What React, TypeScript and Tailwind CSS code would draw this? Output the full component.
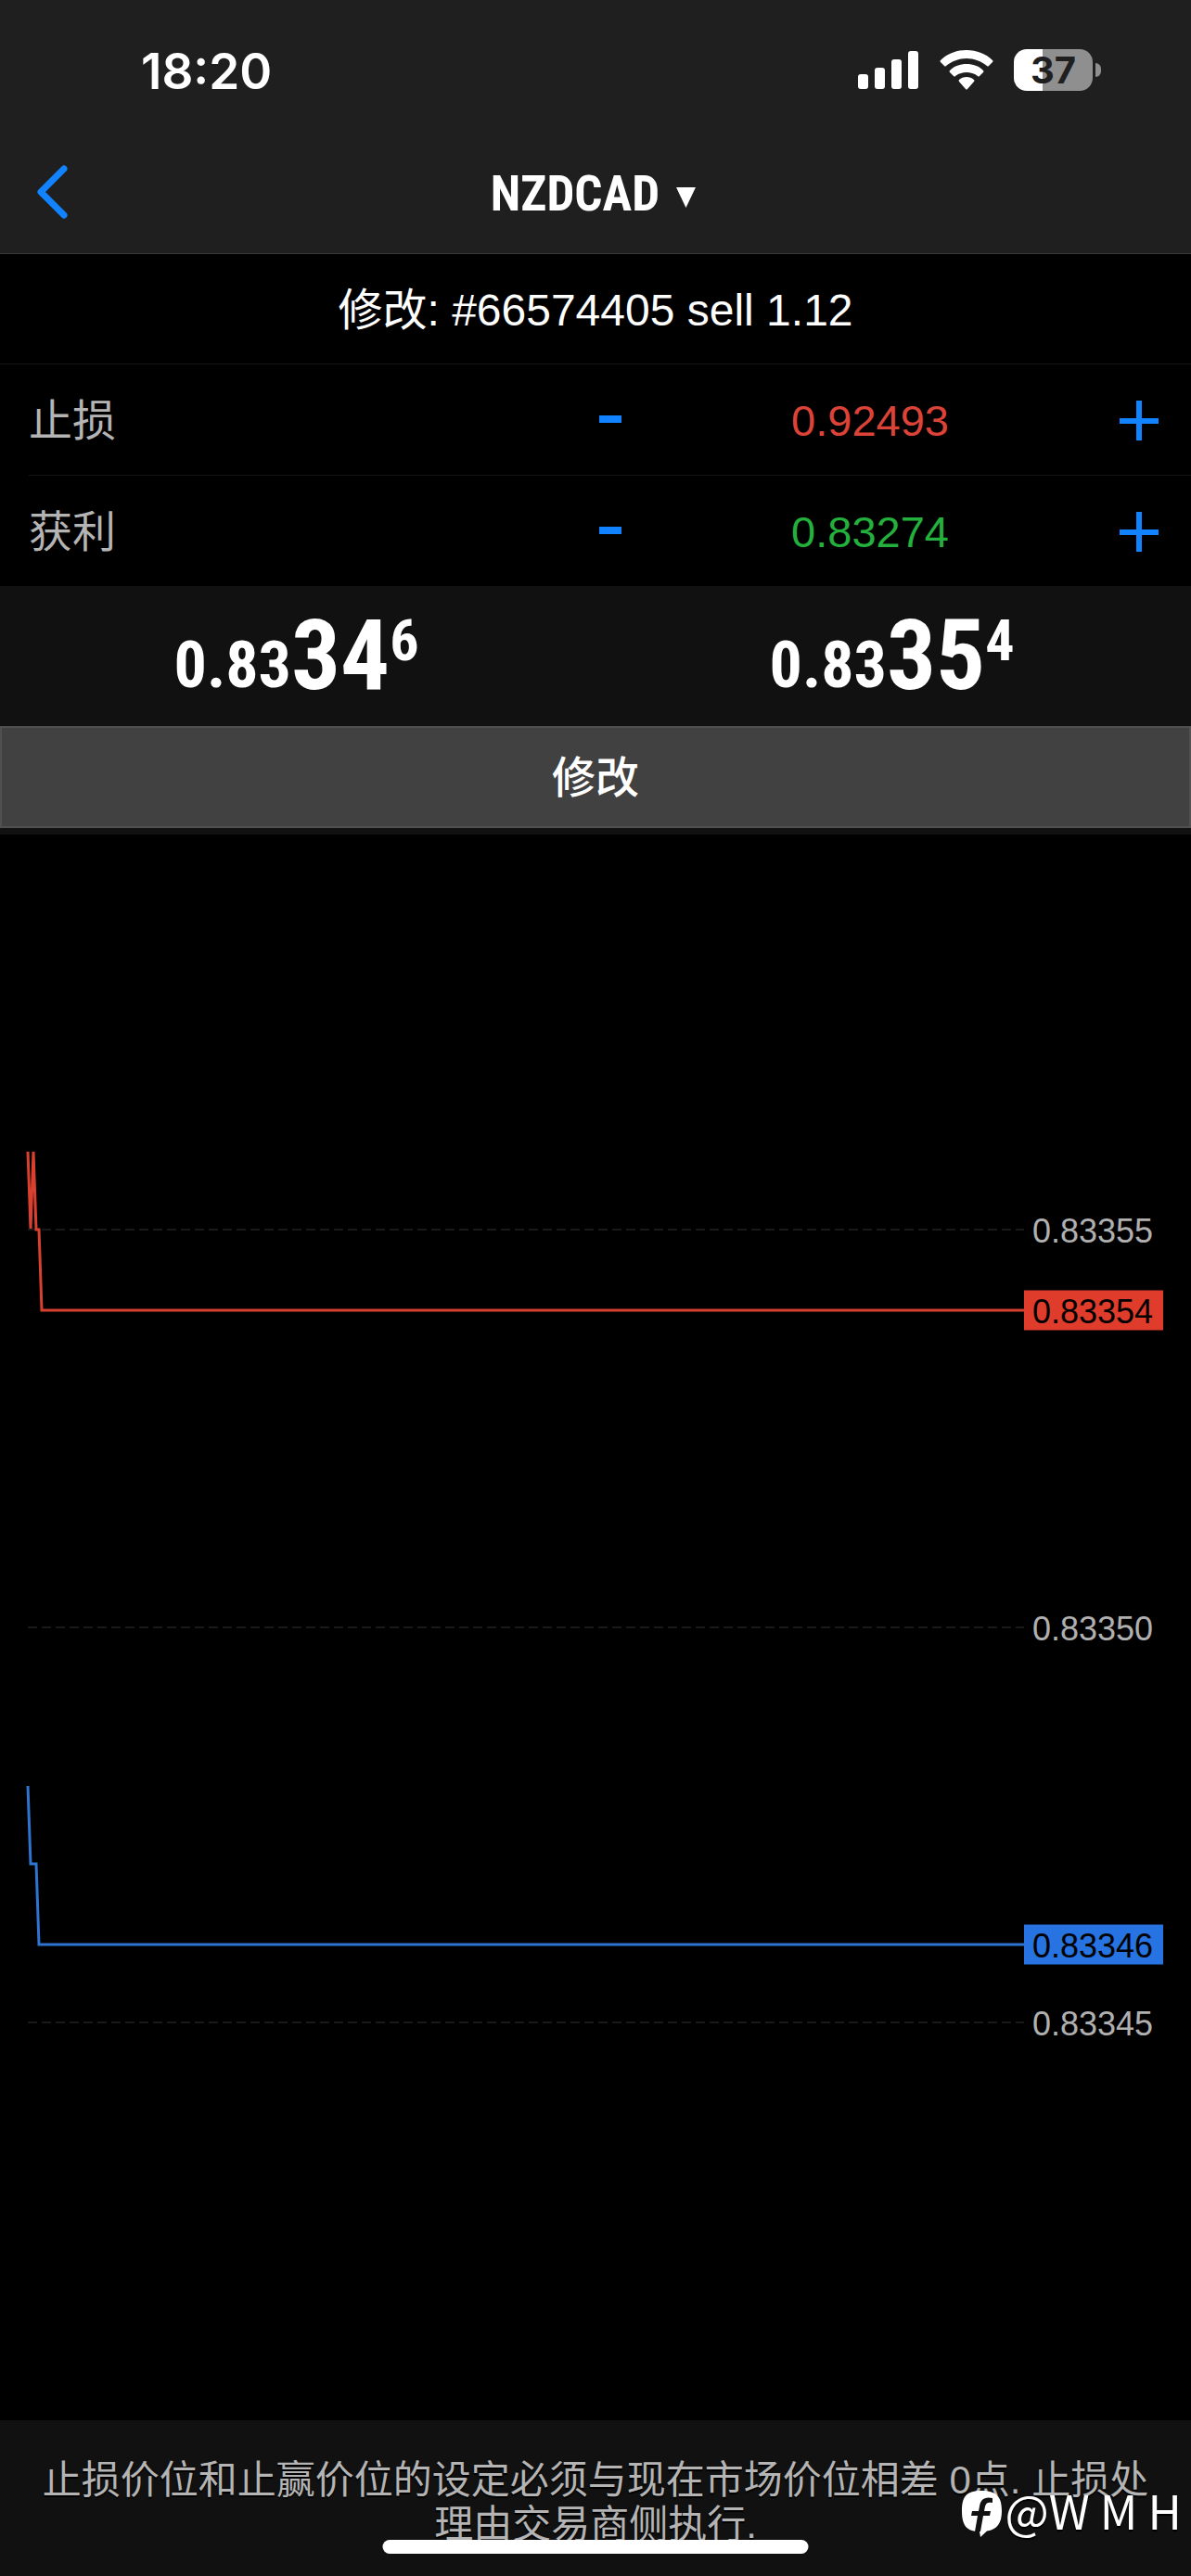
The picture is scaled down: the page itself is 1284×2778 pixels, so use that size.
import { useState } from 'react'

const CHART_W = 1074
const CHART_H = 1710

const gridLines = [
  { price: '0.83355', y: 426 },
  { price: '0.83350', y: 855 },
  { price: '0.83345', y: 1281 },
]

const series = [
  {
    id: 'ask',
    price: '0.83354',
    y: 513,
    points: '0,342 3,425 6,342 9,426 12,426 15,513 1074,513',
    stroke: 'stroke-[#d9402f]',
    tag: 'bg-[#e03c2b]',
  },
  {
    id: 'bid',
    price: '0.83346',
    y: 1197,
    points: '0,1026 3,1110 9,1110 12,1197 1074,1197',
    stroke: 'stroke-[#2f74d0]',
    tag: 'bg-[#2673e1]',
  },
]

const percent = (y: number) => `${(y / CHART_H) * 100}%`

function StatusBar() {
  return (
    <div className="flex h-[140px] items-start justify-between pt-[52px] pr-[97px] pl-[152px]">
      <span className="font-['Inter'] text-[53px] leading-[50px] font-semibold">18:20</span>
      <div className="flex items-center">
        <svg width="66" height="46" viewBox="0 0 66 46" fill="#fff" aria-label="信号">
          <rect x="0" y="28" width="11" height="16" rx="3" />
          <rect x="18" y="21" width="11" height="23" rx="3" />
          <rect x="36" y="12" width="11" height="32" rx="3" />
          <rect x="54" y="3" width="11" height="41" rx="3" />
        </svg>
        <svg className="ml-[21px]" width="60" height="46" viewBox="0 0 60 46" fill="#fff" aria-label="Wi-Fi">
          <path d="M30 2C41 2 51 6 58 13q1 1 0 2l-4 4q-1 1-2 0C46 14 38 11 30 11S14 14 8 19q-1 1-2 0l-4-4q-1-1 0-2C9 6 19 2 30 2Z" />
          <path d="M30 17c7 0 13 2 18 7q1 1 0 2l-4 4q-1 1-2 0c-4-3-8-4-12-4s-8 1-12 4q-1 1-2 0l-4-4q-1-1 0-2c5-5 11-7 18-7Z" />
          <path d="M30 31c3 0 6 1 8 3q1 1 0 2l-7 8q-1 1-2 0l-7-8q-1-1 0-2c2-2 5-3 8-3Z" />
        </svg>
        <div className="ml-[21px] flex items-center gap-[3px]">
          <div className="flex h-[45px] w-[85px] items-center justify-center rounded-[14px] bg-linear-to-r from-white from-37% to-[#8f8f8f] to-37% font-['Inter'] text-[40px] leading-[45px] font-bold text-[#1f1f1f]">
            37
          </div>
          <div className="h-[15px] w-[6px] rounded-r-full bg-[#8f8f8f]" />
        </div>
      </div>
    </div>
  )
}

function NavBar() {
  return (
    <div className="grid h-[134px] grid-cols-[120px_1fr_120px] items-center border-b border-[#3a3a3a]">
      <button type="button" aria-label="返回" className="flex h-full items-center pl-[38px]">
        <svg width="38" height="60" viewBox="0 0 38 60" fill="none" stroke="#1283ff" strokeWidth="7" strokeLinecap="round" strokeLinejoin="round">
          <path d="M31 5 6 30l25 25" />
        </svg>
      </button>
      <button type="button" className="flex items-center justify-center gap-[18px] pt-1 pr-[5px]">
        <span className="font-['Roboto_Condensed','Liberation_Sans',sans-serif] text-[53px] leading-[64px] font-bold">
          NZDCAD
        </span>
        <svg className="mt-[8px]" width="21" height="22" viewBox="0 0 21 22" fill="#fff">
          <path d="M0 0h21L10.500 22Z" />
        </svg>
      </button>
    </div>
  )
}

interface LevelRowProps {
  id: string
  label: string
  initial: string
  color: string
}

function LevelRow({ id, label, initial, color }: LevelRowProps) {
  const [value, setValue] = useState(initial)
  const step = (delta: number) => setValue((Number(value) + delta).toFixed(5))

  return (
    <div className="flex h-[119px] items-center pr-4">
      <label htmlFor={id} className="w-[597px] pt-[3px] text-[47px] text-[#b4b4b4]">
        {label}
      </label>
      <button type="button" aria-label={`${label} 减`} onClick={() => step(-0.00001)} className="flex h-full w-[60px] items-center justify-center">
        <svg width="26" height="12" viewBox="0 0 26 12" fill="#1283ff">
          <rect x="1" y="1" width="24" height="8" />
        </svg>
      </button>
      <input
        id={id}
        value={value}
        onChange={(e) => setValue(e.target.value)}
        className={`min-w-0 flex-1 bg-transparent pt-[3px] text-center text-[47px] outline-none ${color}`}
      />
      <button type="button" aria-label={`${label} 加`} onClick={() => step(0.00001)} className="flex h-full w-20 items-center justify-center">
        <svg width="44" height="44" viewBox="0 0 44 44" fill="#1283ff">
          <rect x="19" y="1" width="6" height="43" />
          <rect x="1" y="20" width="42" height="6" />
        </svg>
      </button>
    </div>
  )
}

function Quote({ base, big, pip }: { base: string; big: string; pip: string }) {
  return (
    <div className="flex items-start justify-center pr-[3px] font-['Roboto_Condensed','Liberation_Sans',sans-serif] font-bold">
      <span className="pt-[25px] text-[70px] leading-[76px]">{base}</span>
      <span className="text-[105px] leading-[108px]">{big}</span>
      <span className="text-[62px] leading-[74px]">{pip}</span>
    </div>
  )
}

function Chart() {
  return (
    <div className="flex min-h-[600px] flex-1 px-[30px]">
      <svg className="min-w-0 flex-1 overflow-visible" viewBox={`0 0 ${CHART_W} ${CHART_H}`} preserveAspectRatio="none" fill="none">
        {gridLines.map((line) => (
          <line key={line.price} x1="0" x2={CHART_W} y1={line.y} y2={line.y} stroke="#333" strokeWidth="1" strokeDasharray="10 5" vectorEffect="non-scaling-stroke" />
        ))}
        {series.map((s) => (
          <polyline key={s.id} points={s.points} className={s.stroke} strokeWidth="3" vectorEffect="non-scaling-stroke" />
        ))}
      </svg>
      <div className="relative w-[150px] text-[36px] leading-[40px]">
        {gridLines.map((line) => (
          <span key={line.price} className="absolute left-0 -translate-y-1/2 pt-1 pl-[9px] text-[#b0b0b0]" style={{ top: percent(line.y) }}>
            {line.price}
          </span>
        ))}
        {series.map((s) => (
          <span key={s.id} className={`absolute inset-x-0 -translate-y-1/2 pt-[3px] pl-[9px] text-black ${s.tag}`} style={{ top: percent(s.y) }}>
            {s.price}
          </span>
        ))}
      </div>
    </div>
  )
}

export default function App() {
  return (
    <main className="relative flex min-h-screen flex-col bg-black font-['Liberation_Sans','Noto_Sans_CJK_SC',sans-serif] text-white">
      <header className="bg-[#1f1f1f]">
        <StatusBar />
        <NavBar />
      </header>

      <h1 className="flex h-[119px] items-center justify-center border-b border-[#141414] pt-[3px] text-[48px]">
        修改: #66574405 sell 1.12
      </h1>
      <div className="pl-[31px]">
        <LevelRow id="stop-loss" label="止损" initial="0.92493" color="text-[#dc4338]" />
        <div className="h-px bg-[#141414]" />
        <LevelRow id="take-profit" label="获利" initial="0.83274" color="text-[#24b03c]" />
      </div>

      <section className="bg-[#111] pb-[7px]">
        <div className="grid h-[151px] grid-cols-2 pt-[22px]">
          <Quote base="0.83" big="34" pip="6" />
          <Quote base="0.83" big="35" pip="4" />
        </div>
        <button type="button" className="h-[110px] w-full border-2 border-[#505050] bg-[#414141] pt-[3px] text-[47px] font-medium">
          修改
        </button>
      </section>

      <Chart />

      <footer className="relative h-[168px] bg-[#111] px-10 pt-[41px] text-center text-[42px] leading-[48px] text-[#b4b4b4] [text-shadow:0_2px_1px_#000]">
        <p>止损价位和止赢价位的设定必须与现在市场价位相差 0点. 止损处理由交易商侧执行.</p>
        <div className="absolute bottom-6 left-1/2 h-[15px] w-[459px] -translate-x-1/2 rounded-full bg-white" />
        <div className="absolute right-[10px] bottom-[41px] flex items-start gap-[2px] text-white">
          <svg width="45" height="52" viewBox="0 0 45 52">
            <path d="M22 1C38 1 44 7 44 23c0 13-5 20-16 21.500L21 51l-1-6C6 45 1 38 1 23 1 7 6 1 22 1Z" fill="#fff" />
            <path d="M34 9c-9-2-13 2-14 9l-1 5h-7l-1 5h7l-3 17h6l3-17h7l1-5h-7l1-5c1-4 3-5 8-4Z" fill="#111" />
          </svg>
          <span className="font-['Noto_Sans_CJK_SC',sans-serif] text-[50px] leading-[42px] font-normal">@W M H</span>
        </div>
      </footer>
    </main>
  )
}
